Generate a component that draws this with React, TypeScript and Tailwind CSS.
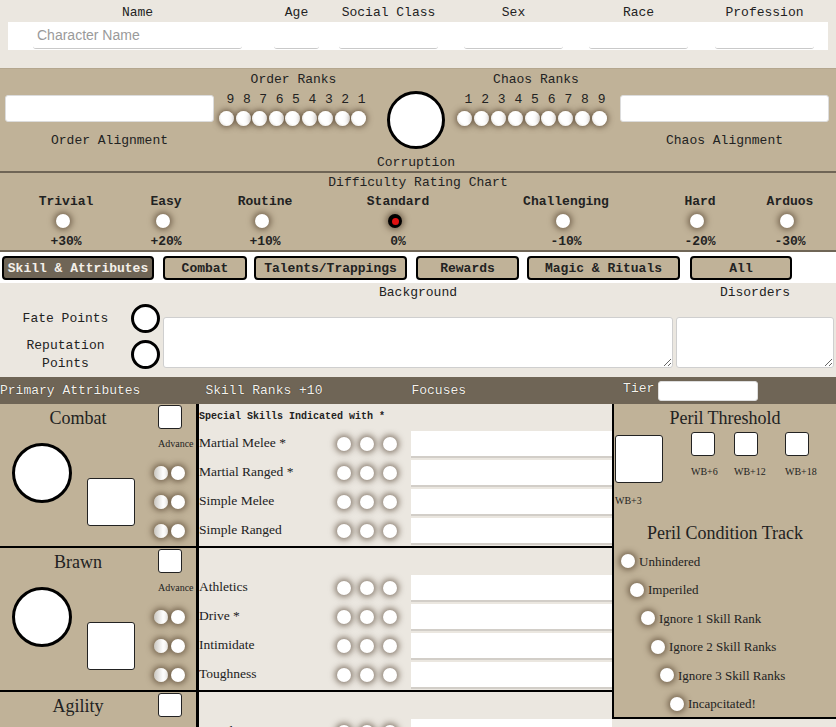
import React from "react";

const headerCols = [
  { label: "Name", cls: "ml-[25px] w-[209px]", placeholder: "Character Name" },
  { label: "Age", cls: "ml-[32px] w-[45px]", placeholder: "" },
  { label: "Social Class", cls: "ml-[20px] w-[99px]", placeholder: "" },
  { label: "Sex", cls: "ml-[26px] w-[99px]", placeholder: "" },
  { label: "Race", cls: "ml-[26px] w-[99px]", placeholder: "" },
  { label: "Profession", cls: "ml-[27px] w-[99px]", placeholder: "" },
];

const levels = [
  { label: "Trivial", pct: "+30%", cls: "ml-[21px]" },
  { label: "Easy", pct: "+20%", cls: "ml-[10px]" },
  { label: "Routine", pct: "+10%", cls: "ml-[9px]" },
  { label: "Standard", pct: "0%", cls: "ml-[43px]", on: true },
  { label: "Challenging", pct: "-10%", cls: "ml-[78px]" },
  { label: "Hard", pct: "-20%", cls: "ml-[44px]" },
  { label: "Arduos", pct: "-30%", cls: "ml-0" },
];

const tabs = [
  { label: "Skill & Attributes", cls: "ml-[2px] w-[152px]", active: true },
  { label: "Combat", cls: "ml-[9px] w-[84px]" },
  { label: "Talents/Trappings", cls: "ml-[7px] w-[153px]" },
  { label: "Rewards", cls: "ml-[9px] w-[103px]" },
  { label: "Magic & Rituals", cls: "ml-[8px] w-[153px]" },
  { label: "All", cls: "ml-[10px] w-[102px]" },
];

const attributes = [
  {
    name: "Combat",
    note: true,
    skills: ["Martial Melee *", "Martial Ranged *", "Simple Melee", "Simple Ranged"],
  },
  { name: "Brawn", note: false, skills: ["Athletics", "Drive *", "Intimidate", "Toughness"] },
  {
    name: "Agility",
    note: false,
    skills: ["Coordination", "Pilot *", "Ride", "Skulduggery", "Stealth"],
  },
];

const perilSteps = [
  { label: "Unhindered", cls: "ml-[7px]" },
  { label: "Imperiled", cls: "ml-[16px]" },
  { label: "Ignore 1 Skill Rank", cls: "ml-[27px]" },
  { label: "Ignore 2 Skill Ranks", cls: "ml-[37px]" },
  { label: "Ignore 3 Skill Ranks", cls: "ml-[46px]" },
  { label: "Incapcitated!", cls: "ml-[56px]" },
];

function Pip({ className = "" }: { className?: string }) {
  return (
    <span
      className={`block shrink-0 w-[14px] h-[14px] rounded-full bg-white shadow-[0_0_6px_2px_rgba(60,42,24,0.6)] ${className}`}
    />
  );
}

function RankPip() {
  return (
    <span className="block shrink-0 w-[15px] h-[15px] rounded-full bg-[radial-gradient(circle_at_65%_40%,#fff_55%,#d6d3ce)] shadow-[0_0_6px_1px_rgba(60,42,24,0.7)]" />
  );
}

function Header() {
  return (
    <div className="h-[69px] px-2 border-b border-[#b4a78f]">
      <div className="flex h-[22px] items-center pt-[3px]">
        {headerCols.map((c) => (
          <div key={c.label} className={`${c.cls} flex justify-center whitespace-nowrap`}>
            {c.label}
          </div>
        ))}
      </div>
      <div className="flex h-[28px] bg-white">
        {headerCols.map((c) => (
          <input
            key={c.label}
            placeholder={c.placeholder}
            className={`${c.cls} h-[27px] border-b border-[#c9c9c9] rounded-b-[3px] bg-white px-1 text-[14px] font-['Liberation_Sans',sans-serif] placeholder:text-[#9a9a9a] outline-none`}
          />
        ))}
      </div>
    </div>
  );
}

function Alignment() {
  const order = [9, 8, 7, 6, 5, 4, 3, 2, 1];
  const chaos = [1, 2, 3, 4, 5, 6, 7, 8, 9];
  return (
    <div className="h-[104px] bg-[#c0b298] border-b-2 border-[#6f6556] flex items-start">
      <div className="ml-[5px] w-[209px] pt-[26px]">
        <input className="block w-full h-[27px] bg-white rounded-[3px] border border-[#dcdcdc] outline-none" />
        <div className="mt-[11px] leading-[16px] text-center">Order Alignment</div>
      </div>

      <div className="ml-[4px] w-[151px] pt-[3px]">
        <div className="leading-[16px] text-center">Order Ranks</div>
        <div className="mt-[4px] ml-[5px] flex gap-[1.5px] leading-[16px]">
          {order.map((n) => (
            <span key={n} className="w-[15px] text-center">
              {n}
            </span>
          ))}
        </div>
        <div className="mt-[3px] ml-[1px] flex gap-[1.5px]">
          {order.map((n) => (
            <RankPip key={n} />
          ))}
        </div>
      </div>

      <div className="ml-[16px] w-[62px] pt-[22px] flex flex-col items-center">
        <div className="w-[58px] h-[58px] rounded-full border-[3px] border-black bg-white" />
        <div className="mt-[6px] leading-[16px] whitespace-nowrap">Corruption</div>
      </div>

      <div className="ml-[8px] w-[154px] pt-[3px]">
        <div className="leading-[16px] text-center pl-[8px]">Chaos Ranks</div>
        <div className="mt-[4px] ml-[6px] flex gap-[1.9px] leading-[16px]">
          {chaos.map((n) => (
            <span key={n} className="w-[15px] text-center">
              {n}
            </span>
          ))}
        </div>
        <div className="mt-[3px] ml-[2px] flex gap-[1.9px]">
          {chaos.map((n) => (
            <RankPip key={n} />
          ))}
        </div>
      </div>

      <div className="ml-[11px] w-[209px] pt-[26px]">
        <input className="block w-full h-[27px] bg-white rounded-[3px] border border-[#dcdcdc] outline-none" />
        <div className="mt-[11px] leading-[16px] text-center">Chaos Alignment</div>
      </div>
    </div>
  );
}

function Difficulty() {
  return (
    <div className="h-[79px] bg-[#c0b298] border-b-2 border-[#6f6556]">
      <div className="pt-[2px] leading-[16px] text-center">Difficulty Rating Chart</div>
      <div className="mt-[3px] flex">
        {levels.map((l) => (
          <div key={l.label} className={`${l.cls} w-[90px] flex flex-col items-center`}>
            <div className="leading-[16px] font-bold whitespace-nowrap">{l.label}</div>
            {l.on ? (
              <span className="mt-[4px] mr-[6px] flex items-center justify-center w-[14px] h-[14px] rounded-full bg-black shadow-[0_0_6px_2px_rgba(60,42,24,0.6)]">
                <span className="block w-[7px] h-[7px] rounded-full bg-[#e01010]" />
              </span>
            ) : (
              <Pip className="mt-[4px] mr-[6px]" />
            )}
            <div className="mt-[6px] leading-[16px] font-bold">{l.pct}</div>
          </div>
        ))}
      </div>
    </div>
  );
}

function Tabs() {
  return (
    <div className="h-[31px] bg-white pt-[4px] flex items-start">
      {tabs.map((t) => (
        <button
          key={t.label}
          className={`${t.cls} h-[24px] border-2 border-black rounded-[4px] font-bold text-[13px] leading-none whitespace-nowrap ${
            t.active ? "bg-[#6f6556] text-[#f4f0e9]" : "bg-[#c0b298] text-[#222]"
          }`}
        >
          {t.label}
        </button>
      ))}
    </div>
  );
}

function Background() {
  return (
    <div className="h-[94px] flex">
      <div className="w-[163px] pt-[21px]">
        <div className="flex items-center h-[29px]">
          <div className="w-[131px] text-center leading-[16px]">Fate Points</div>
          <div className="w-[29px] h-[29px] rounded-full border-[3px] border-black bg-white" />
        </div>
        <div className="flex items-center mt-[7px] h-[29px]">
          <div className="w-[131px] text-center leading-[18px]">
            Reputation
            <br />
            Points
          </div>
          <div className="w-[29px] h-[29px] rounded-full border-[3px] border-black bg-white" />
        </div>
      </div>
      <div className="w-[510px]">
        <div className="pt-[2px] leading-[16px] text-center">Background</div>
        <textarea className="block mt-[16px] w-full h-[51px] rounded-[3px] border border-[#cfcfcf] bg-white outline-none" />
      </div>
      <div className="ml-[3px] w-[158px]">
        <div className="pt-[2px] leading-[16px] text-center">Disorders</div>
        <textarea className="block mt-[16px] w-full h-[51px] rounded-[3px] border border-[#cfcfcf] bg-white outline-none" />
      </div>
    </div>
  );
}

function Bar() {
  return (
    <div className="h-[27px] bg-[#6f6556] text-[#f6f2ec] flex items-center whitespace-nowrap [text-shadow:0_0_1px_#222]">
      <span>Primary Attributes</span>
      <span className="ml-[65px]">Skill Ranks +10</span>
      <span className="ml-[89px]">Focuses</span>
      <span className="ml-[157px] -mt-[3px]">Tier</span>
      <input className="ml-[4px] w-[100px] h-[20px] rounded-[3px] bg-white border border-[#ddd] outline-none" />
    </div>
  );
}

function AttributeRow({ name, note, skills }: { name: string; note: boolean; skills: string[] }) {
  return (
    <div className="flex border-b-2 border-black font-['Liberation_Serif',serif]">
      <div className="w-[199px] shrink-0 border-r-[3px] border-black bg-[#c0b298] flex">
        <div className="w-[150px]">
          <div className="h-[25px] leading-[29px] text-[18px] text-center pl-[6px]">{name}</div>
          <div className="flex items-start">
            <div className="ml-[12px] mt-[14px] w-[60px] h-[60px] rounded-full border-[3px] border-black bg-white" />
            <div className="ml-[15px] mt-[49px] w-[48px] h-[48px] rounded-[3px] border border-[#222] bg-white" />
          </div>
        </div>
        <div className="w-[46px]">
          <div className="h-[25px] pt-[1px] pl-[8px]">
            <div className="w-[24px] h-[24px] rounded-[3px] border border-[#222] bg-white" />
          </div>
          <div className="h-[29px] flex items-center pl-[8px] text-[10px]">Advance</div>
          {[0, 1, 2].map((i) => (
            <div key={i} className="h-[29px] flex items-center pl-[4px] gap-[3px]">
              <span className="block w-[14px] h-[14px] rounded-full bg-[linear-gradient(90deg,#c9c6c0,#fff_65%)] shadow-[0_0_6px_2px_rgba(60,42,24,0.6)]" />
              <Pip />
            </div>
          ))}
        </div>
      </div>
      <div className="flex-1 bg-[#ebe7e0] pb-[1px]">
        <div className="h-[25px] flex items-center text-[10px] font-['Liberation_Mono',monospace] font-bold">
          {note ? "Special Skills Indicated with *" : ""}
        </div>
        {skills.map((s) => (
          <div key={s} className="h-[29px] flex items-center">
            <div className="w-[138px] text-[13.5px] whitespace-nowrap">{s}</div>
            <div className="flex gap-[9px]">
              <Pip />
              <Pip />
              <Pip />
            </div>
            <input className="ml-[14px] flex-1 self-end h-[27px] bg-white border-b-2 border-[#d2cec8] outline-none" />
          </div>
        ))}
      </div>
    </div>
  );
}

function Peril() {
  return (
    <div className="w-[224px] h-[315px] shrink-0 border-l-2 border-b-2 border-black bg-[#c0b298] font-['Liberation_Serif',serif]">
      <div className="h-[25px] leading-[29px] text-[18px] text-center">Peril Threshold</div>
      <div className="flex items-start text-[10px]">
        <div className="ml-[1px] w-[48px] shrink-0">
          <div className="mt-[6px] w-[48px] h-[48px] rounded-[3px] border border-[#222] bg-white" />
          <div className="mt-[12px] leading-[12px] whitespace-nowrap">WB+3</div>
        </div>
        <div className="ml-[28px] w-[24px] shrink-0">
          <div className="mt-[3px] w-[24px] h-[24px] rounded-[3px] border border-[#222] bg-white" />
          <div className="mt-[10px] leading-[12px] whitespace-nowrap">WB+6</div>
        </div>
        <div className="ml-[19px] w-[24px] shrink-0">
          <div className="mt-[3px] w-[24px] h-[24px] rounded-[3px] border border-[#222] bg-white" />
          <div className="mt-[10px] leading-[12px] whitespace-nowrap">WB+12</div>
        </div>
        <div className="ml-[27px] w-[24px] shrink-0">
          <div className="mt-[3px] w-[24px] h-[24px] rounded-[3px] border border-[#222] bg-white" />
          <div className="mt-[10px] leading-[12px] whitespace-nowrap">WB+18</div>
        </div>
      </div>
      <div className="mt-[12px] h-[26px] leading-[28px] text-[18px] text-center">Peril Condition Track</div>
      <div className="mt-[2px]">
        {perilSteps.map((p) => (
          <div key={p.label} className={`${p.cls} h-[28.5px] flex items-center`}>
            <Pip />
            <span className="ml-[4px] text-[13px] whitespace-nowrap">{p.label}</span>
          </div>
        ))}
      </div>
    </div>
  );
}

export default function App() {
  return (
    <div className="w-full font-['Liberation_Mono',monospace] text-[13px] text-[#222] bg-[#ebe7e0]">
      <Header />
      <Alignment />
      <Difficulty />
      <Tabs />
      <Background />
      <Bar />
      <div className="flex items-start">
        <div className="w-[612px] shrink-0">
          {attributes.map((a) => (
            <AttributeRow key={a.name} name={a.name} note={a.note} skills={a.skills} />
          ))}
        </div>
        <Peril />
      </div>
    </div>
  );
}
